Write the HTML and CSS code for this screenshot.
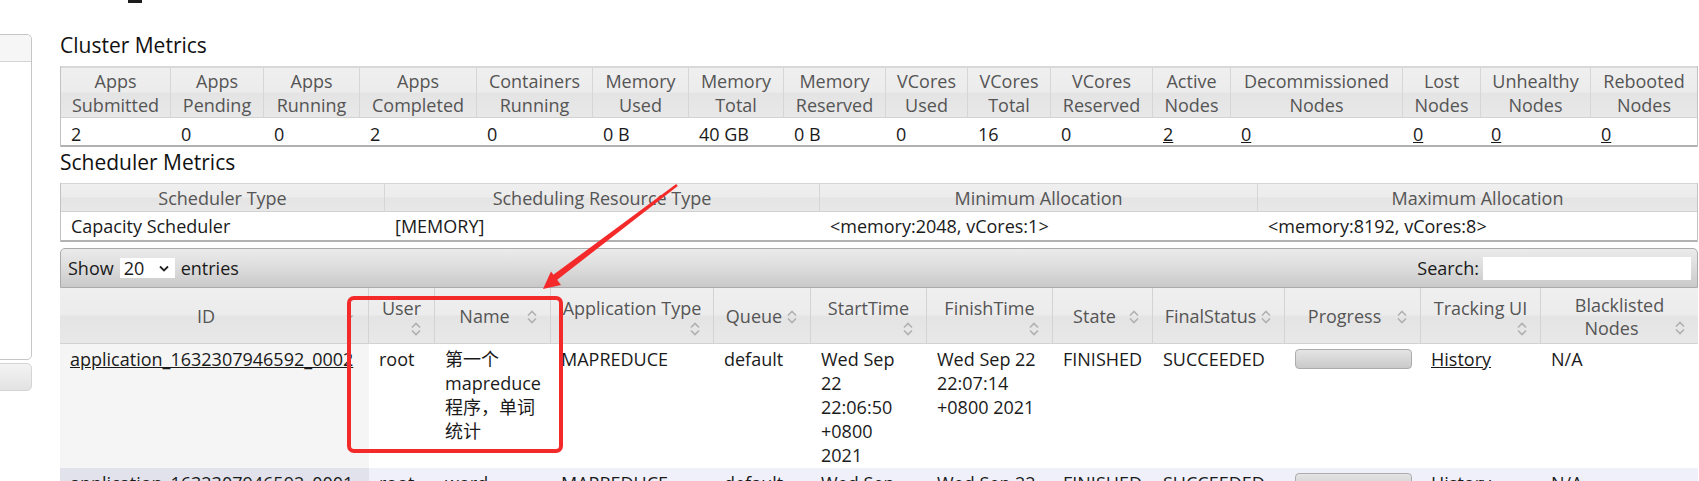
FILE: index.html
```html
<!DOCTYPE html>
<html lang="en">
<head>
<meta charset="utf-8">
<title>All Applications</title>
<link rel="stylesheet" href="styles.css">
</head>
<body>
<div class="page">
  <aside class="side">
    <div class="side-box"><div class="side-head"></div></div>
    <div class="side-btn"></div>
  </aside>
  <main class="main">
    <div class="clip"><span class="clip-mark"></span></div>
    <h3 class="heading">Cluster Metrics</h3>
    <table class="metrics cluster">
      <colgroup>
        <col class="c110"><col class="c93"><col class="c96"><col class="c117"><col class="c116"><col class="c96"><col class="c95"><col class="c102"><col class="c82"><col class="c83"><col class="c102"><col class="c78"><col class="c172"><col class="c78"><col class="c110"><col class="c106">
      </colgroup>
      <thead>
        <tr>
          <th>Apps<br>Submitted</th><th>Apps<br>Pending</th><th>Apps<br>Running</th><th>Apps<br>Completed</th><th>Containers<br>Running</th><th>Memory<br>Used</th><th>Memory<br>Total</th><th>Memory<br>Reserved</th><th>VCores<br>Used</th><th>VCores<br>Total</th><th>VCores<br>Reserved</th><th>Active<br>Nodes</th><th>Decommissioned<br>Nodes</th><th>Lost<br>Nodes</th><th>Unhealthy<br>Nodes</th><th>Rebooted<br>Nodes</th>
        </tr>
      </thead>
      <tbody>
        <tr>
          <td>2</td><td>0</td><td>0</td><td>2</td><td>0</td><td>0 B</td><td>40 GB</td><td>0 B</td><td>0</td><td>16</td><td>0</td><td><a href="#">2</a></td><td><a href="#">0</a></td><td><a href="#">0</a></td><td><a href="#">0</a></td><td><a href="#">0</a></td>
        </tr>
      </tbody>
    </table>
    <h3 class="heading heading-2">Scheduler Metrics</h3>
    <table class="metrics sched">
      <colgroup><col class="c324"><col class="c435"><col class="c438"><col class="c439"></colgroup>
      <thead>
        <tr><th>Scheduler Type</th><th>Scheduling Resource Type</th><th>Minimum Allocation</th><th>Maximum Allocation</th></tr>
      </thead>
      <tbody>
        <tr><td>Capacity Scheduler</td><td>[MEMORY]</td><td>&lt;memory:2048, vCores:1&gt;</td><td>&lt;memory:8192, vCores:8&gt;</td></tr>
      </tbody>
    </table>
    <div class="dt">
      <div class="dt-bar">
        <div class="len">Show <span class="sel">20 <svg class="sel-caret" width="10" height="7" viewBox="0 0 10 7"><polyline points="1,1.5 5,5.5 9,1.5" fill="none" stroke="#222" stroke-width="1.8"/></svg></span> entries</div>
        <div class="search">Search: <span class="inp"></span></div>
      </div>
      <table class="apps">
        <colgroup>
          <col class="a309"><col class="a66"><col class="a116"><col class="a163"><col class="a97"><col class="a116b"><col class="a126"><col class="a100"><col class="a132"><col class="a136"><col class="a120"><col class="a157">
        </colgroup>
        <thead>
          <tr>
            <th><div class="sw"><span class="t">ID</span><svg class="si" width="16" height="16" viewBox="0 0 16 16"><polygon points="4.5,6.5 11.5,6.5 8,10" fill="#a8a8a8"/></svg></div></th>
            <th><div class="sw col"><span class="t">User</span><svg class="si" width="16" height="16" viewBox="0 0 16 16"><polyline points="4,6.5 8,2.5 12,6.5" fill="none" stroke="#b0b0b0" stroke-width="1.6"/><polyline points="4,9.5 8,13.5 12,9.5" fill="none" stroke="#b0b0b0" stroke-width="1.6"/></svg></div></th>
            <th><div class="sw"><span class="t">Name</span><svg class="si" width="16" height="16" viewBox="0 0 16 16"><polyline points="4,6.5 8,2.5 12,6.5" fill="none" stroke="#b0b0b0" stroke-width="1.6"/><polyline points="4,9.5 8,13.5 12,9.5" fill="none" stroke="#b0b0b0" stroke-width="1.6"/></svg></div></th>
            <th><div class="sw col"><span class="t">Application Type</span><svg class="si" width="16" height="16" viewBox="0 0 16 16"><polyline points="4,6.5 8,2.5 12,6.5" fill="none" stroke="#b0b0b0" stroke-width="1.6"/><polyline points="4,9.5 8,13.5 12,9.5" fill="none" stroke="#b0b0b0" stroke-width="1.6"/></svg></div></th>
            <th><div class="sw"><span class="t">Queue</span><svg class="si" width="16" height="16" viewBox="0 0 16 16"><polyline points="4,6.5 8,2.5 12,6.5" fill="none" stroke="#b0b0b0" stroke-width="1.6"/><polyline points="4,9.5 8,13.5 12,9.5" fill="none" stroke="#b0b0b0" stroke-width="1.6"/></svg></div></th>
            <th><div class="sw col"><span class="t">StartTime</span><svg class="si" width="16" height="16" viewBox="0 0 16 16"><polyline points="4,6.5 8,2.5 12,6.5" fill="none" stroke="#b0b0b0" stroke-width="1.6"/><polyline points="4,9.5 8,13.5 12,9.5" fill="none" stroke="#b0b0b0" stroke-width="1.6"/></svg></div></th>
            <th><div class="sw col"><span class="t">FinishTime</span><svg class="si" width="16" height="16" viewBox="0 0 16 16"><polyline points="4,6.5 8,2.5 12,6.5" fill="none" stroke="#b0b0b0" stroke-width="1.6"/><polyline points="4,9.5 8,13.5 12,9.5" fill="none" stroke="#b0b0b0" stroke-width="1.6"/></svg></div></th>
            <th><div class="sw"><span class="t">State</span><svg class="si" width="16" height="16" viewBox="0 0 16 16"><polyline points="4,6.5 8,2.5 12,6.5" fill="none" stroke="#b0b0b0" stroke-width="1.6"/><polyline points="4,9.5 8,13.5 12,9.5" fill="none" stroke="#b0b0b0" stroke-width="1.6"/></svg></div></th>
            <th><div class="sw"><span class="t">FinalStatus</span><svg class="si" width="16" height="16" viewBox="0 0 16 16"><polyline points="4,6.5 8,2.5 12,6.5" fill="none" stroke="#b0b0b0" stroke-width="1.6"/><polyline points="4,9.5 8,13.5 12,9.5" fill="none" stroke="#b0b0b0" stroke-width="1.6"/></svg></div></th>
            <th><div class="sw"><span class="t">Progress</span><svg class="si" width="16" height="16" viewBox="0 0 16 16"><polyline points="4,6.5 8,2.5 12,6.5" fill="none" stroke="#b0b0b0" stroke-width="1.6"/><polyline points="4,9.5 8,13.5 12,9.5" fill="none" stroke="#b0b0b0" stroke-width="1.6"/></svg></div></th>
            <th><div class="sw col"><span class="t">Tracking UI</span><svg class="si" width="16" height="16" viewBox="0 0 16 16"><polyline points="4,6.5 8,2.5 12,6.5" fill="none" stroke="#b0b0b0" stroke-width="1.6"/><polyline points="4,9.5 8,13.5 12,9.5" fill="none" stroke="#b0b0b0" stroke-width="1.6"/></svg></div></th>
            <th><div class="sw col"><span class="t">Blacklisted</span><span class="row2"><span class="t">Nodes</span><svg class="si" width="16" height="16" viewBox="0 0 16 16"><polyline points="4,6.5 8,2.5 12,6.5" fill="none" stroke="#b0b0b0" stroke-width="1.6"/><polyline points="4,9.5 8,13.5 12,9.5" fill="none" stroke="#b0b0b0" stroke-width="1.6"/></svg></span></div></th>
          </tr>
        </thead>
        <tbody>
          <tr class="even">
            <td class="sorted"><a href="#">application_1632307946592_0002</a></td>
            <td>root</td>
            <td class="cjk">第一个<br>mapreduce<br>程序，单词<br>统计</td>
            <td>MAPREDUCE</td>
            <td>default</td>
            <td>Wed Sep<br>22<br>22:06:50<br>+0800<br>2021</td>
            <td>Wed Sep 22<br>22:07:14<br>+0800 2021</td>
            <td>FINISHED</td>
            <td>SUCCEEDED</td>
            <td><div class="pbar"></div></td>
            <td><a href="#">History</a></td>
            <td>N/A</td>
          </tr>
          <tr class="odd">
            <td class="sorted"><a href="#">application_1632307946592_0001</a></td>
            <td>root</td>
            <td>word</td>
            <td>MAPREDUCE</td>
            <td>default</td>
            <td>Wed Sep<br>22</td>
            <td>Wed Sep 22</td>
            <td>FINISHED</td>
            <td>SUCCEEDED</td>
            <td><div class="pbar"></div></td>
            <td><a href="#">History</a></td>
            <td>N/A</td>
          </tr>
        </tbody>
      </table>
    </div>
  </main>
</div>
<svg class="annot" width="1699" height="481" viewBox="0 0 1699 481">
  <rect x="349" y="298" width="212" height="153" rx="5" ry="5" fill="none" stroke="#f42a2a" stroke-width="4"/>
  <polygon points="677.8,186 676.2,184 551,276.5 555,281.5" fill="#f42a2a"/>
  <polygon points="543,289 561,285 551,271.5" fill="#f42a2a"/>
</svg>
</body>
</html>
```

FILE: styles.css
```css
html, body {
  margin: 0;
  padding: 0;
}
body {
  width: 1699px;
  height: 481px;
  overflow: hidden;
  background: #ffffff;
  font-family: "Open Sans", "Noto Sans CJK SC", sans-serif;
  font-size: 18px;
  color: #1a1a1a;
  position: relative;
}
.page {
  display: flex;
  align-items: flex-start;
}
.side {
  flex: none;
  width: 32px;
  margin-right: 28px;
}
.side-box {
  box-sizing: border-box;
  margin-top: 34px;
  margin-left: -10px;
  width: 42px;
  height: 326px;
  border: 1px solid #c6c6c6;
  border-radius: 0 5px 5px 0;
}
.side-head {
  height: 26px;
  border-bottom: 1px solid #d4d4d4;
  background: #f6f6f6;
  border-radius: 0 5px 0 0;
}
.side-btn {
  box-sizing: border-box;
  margin-top: 3px;
  margin-left: -10px;
  width: 42px;
  height: 28px;
  border: 1px solid #d4d4d4;
  border-radius: 5px;
  background: linear-gradient(#f3f3f3, #e3e3e3);
}
.main {
  flex: none;
  width: 1638px;
}
.clip {
  height: 3px;
}
.clip-mark {
  display: block;
  margin-left: 68px;
  width: 14px;
  height: 3px;
  background: #1c1c1c;
}
.heading {
  margin: 28px 0 7px;
  font-size: 21px;
  line-height: 28px;
  font-weight: normal;
  color: #111;
}
.heading-2 {
  margin-top: 1px;
}
a {
  color: #1a1a1a;
  text-decoration: underline;
}

/* metric tables */
.metrics {
  width: 1638px;
  table-layout: fixed;
  border-collapse: separate;
  border-spacing: 0;
  border-left: 1px solid #c2c2c2;
  border-right: 1px solid #c2c2c2;
}
.metrics th {
  font-weight: normal;
  color: #555;
  text-align: center;
  padding: 1px 2px 0;
  background: linear-gradient(#efefef 0%, #ececec 48%, #e4e4e4 52%, #e8e8e8 100%);
  border-right: 1px solid #d6d6d6;
  border-bottom: 1px solid #d2d2d2;
  white-space: nowrap;
  overflow: hidden;
}
.metrics th:last-child {
  border-right: 0;
}
.metrics td {
  padding: 0 10px;
  white-space: nowrap;
  overflow: hidden;
  border-bottom: 2px solid #b2b2b2;
}
.cluster th {
  border-top: 2px solid #d8d8d8;
  height: 48px;
  line-height: 24px;
}
.cluster td {
  height: 22px;
  padding-top: 5px;
  line-height: 22px;
}
.sched th {
  border-top: 1px solid #d6d6d6;
  height: 26px;
  line-height: 26px;
}
.sched td {
  height: 28px;
  line-height: 28px;
}
.c110 { width: 110px; }
.c93 { width: 93px; }
.c96 { width: 96px; }
.c117 { width: 117px; }
.c116 { width: 116px; }
.c95 { width: 95px; }
.c102 { width: 102px; }
.c82 { width: 82px; }
.c83 { width: 83px; }
.c78 { width: 78px; }
.c172 { width: 172px; }
.c106 { width: 106px; }
.c324 { width: 324px; }
.c435 { width: 435px; }
.c438 { width: 438px; }
.c439 { width: 439px; }

/* data table */
.dt {
  margin-top: 6px;
  width: 1638px;
}
.dt-bar {
  box-sizing: border-box;
  height: 40px;
  display: flex;
  align-items: center;
  justify-content: space-between;
  padding: 0 6px 0 7px;
  border: 1px solid #ababab;
  border-radius: 5px 5px 0 0;
  background: linear-gradient(#ebebeb 0%, #dcdcdc 50%, #c9c9c9 100%);
  color: #1a1a1a;
}
.len, .search {
  display: flex;
  align-items: center;
  gap: 6px;
  white-space: nowrap;
}
.sel {
  box-sizing: border-box;
  width: 55px;
  height: 20px;
  background: #fff;
  display: flex;
  align-items: center;
  justify-content: space-between;
  padding: 0 6px 0 4px;
  line-height: 20px;
}
.sel-caret {
  display: block;
}
.search {
  gap: 4px;
}
.inp {
  display: block;
  width: 208px;
  height: 23px;
  background: #fff;
}
.apps {
  width: 1638px;
  table-layout: fixed;
  border-collapse: separate;
  border-spacing: 0;
}
.apps th {
  height: 53px;
  padding: 2px 10px 0;
  font-weight: normal;
  color: #555;
  line-height: 23px;
  background: linear-gradient(#efefef 0%, #ececec 48%, #e4e4e4 52%, #e8e8e8 100%);
  border-right: 1px solid #d3d3d3;
  border-bottom: 1px solid #d3d3d3;
  vertical-align: middle;
  white-space: nowrap;
}
.apps th:last-child {
  border-right: 0;
}
.sw {
  display: flex;
  align-items: center;
}
.sw .t {
  flex: 1;
  text-align: center;
}
.si {
  flex: none;
  display: block;
}
.sw.col {
  flex-direction: column;
  align-items: stretch;
}
.sw.col > .si {
  align-self: flex-end;
  margin-top: 1px;
}
.row2 {
  display: flex;
  align-items: center;
}
.apps td {
  padding: 3px 10px 1px;
  line-height: 24px;
  vertical-align: top;
  white-space: nowrap;
  overflow: hidden;
  background: #ffffff;
}
.apps td.cjk {
  font-family: "Open Sans", "Noto Sans CJK SC", sans-serif;
}
.apps tr.even td.sorted {
  background: #f5f5f5;
}
.apps tr.odd td {
  background: #f0f0fb;
}
.apps tr.odd td.sorted {
  background: #e2e2ec;
}
.pbar {
  box-sizing: border-box;
  width: 117px;
  height: 20px;
  margin-top: 2px;
  border: 1px solid #acacac;
  border-radius: 4px;
  background: linear-gradient(#e4e4e4, #c9c9c9);
}
.a309 { width: 309px; }
.a66 { width: 66px; }
.a116 { width: 116px; }
.a163 { width: 163px; }
.a97 { width: 97px; }
.a116b { width: 116px; }
.a126 { width: 126px; }
.a100 { width: 100px; }
.a132 { width: 132px; }
.a136 { width: 136px; }
.a120 { width: 120px; }
.a157 { width: 157px; }

/* annotation overlay */
.annot {
  position: absolute;
  left: 0;
  top: 0;
  pointer-events: none;
}
```
